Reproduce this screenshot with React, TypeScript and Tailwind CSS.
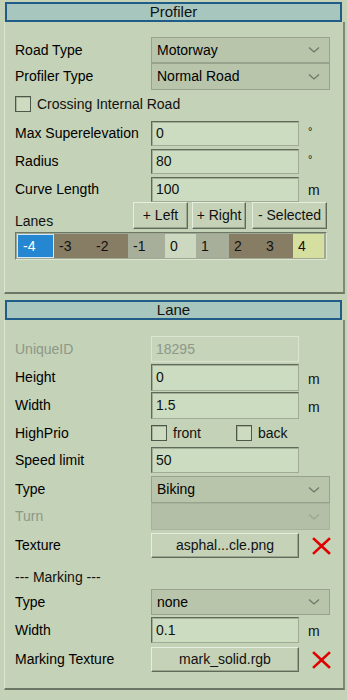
import React from "react";

const font = { fontFamily: '"Liberation Sans", Arial, sans-serif' };

const Chevron = ({ muted }: { muted?: boolean }) => (
    <svg width="12" height="8" viewBox="0 0 12 8" className="absolute right-[9px] top-1/2 -translate-y-1/2">
        <polyline points="1,1.5 6,6 11,1.5" fill="none" stroke={muted ? "#9aa58f" : "#6e7867"} strokeWidth="1.3" />
    </svg>
);

const Select = ({ value, disabled }: { value?: string; disabled?: boolean }) => (
    <div
        className={`relative w-[179px] h-full border flex items-center pl-[5px] ${
            disabled ? "bg-[#b3c0a7] border-[#a6b29a]" : "bg-[#b8c5ab] border-[#97a38c]"
        }`}
    >
        <span className="text-black">{value}</span>
        <Chevron muted={disabled} />
    </div>
);

const Input = ({ value, disabled }: { value: string; disabled?: boolean }) => (
    <div
        className={`w-[148px] h-full flex items-center pl-[4px] border ${
            disabled
                ? "bg-[#c6d4b9] border-[#dbe5d1] text-[#8d978a]"
                : "bg-[#ccdcc0] border-t-[#5f6a58] border-l-[#5f6a58] border-r-[#a0ab95] border-b-[#a0ab95] shadow-[inset_1px_1px_0_#a2ad98]"
        }`}
    >
        {value}
    </div>
);

const Button = ({ label, w }: { label: string; w: string }) => (
    <div
        className={`${w} h-full flex items-center justify-center bg-[#c5d2b8] border border-t-[#e6eedf] border-l-[#e6eedf] border-r-[#5f6a58] border-b-[#5f6a58] shadow-[inset_-1px_-1px_0_#9aa68f]`}
    >
        {label}
    </div>
);

const RedX = () => (
    <svg width="19" height="18" viewBox="0 0 19 18" className="ml-[13px]">
        <path d="M2 2 L17 16 M17 2 L2 16" stroke="#e00000" strokeWidth="2.6" strokeLinecap="square" />
    </svg>
);

const Check = () => (
    <div className="w-[16px] h-[16px] border border-[#4e5848] bg-[#cddcc1] shadow-[inset_1px_1px_0_#a7b29c]" />
);

const Row = ({
    label,
    h,
    mt,
    muted,
    children,
}: {
    label: string;
    h: string;
    mt: string;
    muted?: boolean;
    children?: React.ReactNode;
}) => (
    <div className={`flex items-center ${h} ${mt}`}>
        <div className={`w-[136px] ${muted ? "text-[#8d978a]" : "text-black"}`}>{label}</div>
        {children}
    </div>
);

const Unit = ({ u }: { u: string }) => (
    <span className={`ml-[9px] self-end ${u === "°" ? "self-start mt-[2px] text-[11px]" : "mb-[1px]"}`}>{u}</span>
);

const TitleBar = ({ title }: { title: string }) => (
    <div className="mx-[5px] h-[20px] bg-[#a6c6be] border-2 border-[#1f5d88] flex items-center justify-center text-[#111] text-[15px]">
        {title}
    </div>
);

const lanes = [
    { n: "-4", bg: "bg-[#2586d2]", fg: "text-white", w: "w-[37px]" },
    { n: "-3", bg: "bg-[#877d64]", fg: "text-[#111]", w: "w-[37px]" },
    { n: "-2", bg: "bg-[#877d64]", fg: "text-[#111]", w: "w-[37px]" },
    { n: "-1", bg: "bg-[#a7af9a]", fg: "text-[#111]", w: "w-[37px]" },
    { n: "0", bg: "bg-[#ccd8c0]", fg: "text-[#111]", w: "w-[31px]" },
    { n: "1", bg: "bg-[#a7af9a]", fg: "text-[#111]", w: "w-[33px]" },
    { n: "2", bg: "bg-[#877d64]", fg: "text-[#111]", w: "w-[32px]" },
    { n: "3", bg: "bg-[#877d64]", fg: "text-[#111]", w: "w-[32px]" },
    { n: "4", bg: "bg-[#d5e0a0]", fg: "text-[#111]", w: "w-[31px]" },
];

export default function App() {
    return (
        <div className="w-[347px] h-[700px] bg-[#c4d2b7] pt-[2px] text-[14px] text-[#111] overflow-hidden" style={font}>
            <TitleBar title="Profiler" />
            {/* Profiler panel */}
            <div className="ml-[4px] w-[341px] h-[272px] border-l border-l-[#dce6d3] border-r-2 border-r-[#7e8a75] border-b-2 border-b-[#6d7765] pl-[10px] pt-[15px]">
                <Row label="Road Type" h="h-[26px]" mt="mt-0">
                    <Select value="Motorway" />
                </Row>
                <Row label="Profiler Type" h="h-[27px]" mt="mt-0">
                    <Select value="Normal Road" />
                </Row>
                <div className="flex items-center h-[20px] mt-[4px]">
                    <Check />
                    <span className="ml-[6px]">Crossing Internal Road</span>
                </div>
                <Row label="Max Superelevation" h="h-[25px]" mt="mt-[7px]">
                    <Input value="0" />
                    <Unit u="°" />
                </Row>
                <Row label="Radius" h="h-[25px]" mt="mt-[3px]">
                    <Input value="80" />
                    <Unit u="°" />
                </Row>
                <Row label="Curve Length" h="h-[25px]" mt="mt-[3px]">
                    <Input value="100" />
                    <Unit u="m" />
                </Row>
                <div className="flex h-[27px] mt-[0px]">
                    <span className="self-end mb-[-3px] w-[118px]">Lanes</span>
                    <Button label="+ Left" w="w-[55px]" />
                    <div className="w-[4px]" />
                    <Button label="+ Right" w="w-[54px]" />
                    <div className="w-[6px]" />
                    <Button label="- Selected" w="w-[75px]" />
                </div>
                <div className="mt-[3px] w-[312px] h-[28px] border border-t-[#6d7765] border-l-[#6d7765] border-r-[#dce6d3] border-b-[#dce6d3] p-[1px] bg-[#9ea893] flex">
                    {lanes.map((l) => (
                        <div key={l.n} className={`${l.w} h-full ${l.bg} ${l.fg} flex items-center pl-[5px] ${l.n === "-4" ? "border border-[#d7e6f5]" : ""}`}>
                            {l.n}
                        </div>
                    ))}
                </div>
            </div>

            <div className="h-[6px]" />
            <TitleBar title="Lane" />
            {/* Lane panel */}
            <div className="ml-[4px] w-[341px] h-[370px] border-l border-l-[#dce6d3] border-r-2 border-r-[#7e8a75] border-b-2 border-b-[#6d7765] pl-[10px] pt-[16px]">
                <Row label="UniqueID" h="h-[26px]" mt="mt-0" muted>
                    <Input value="18295" disabled />
                </Row>
                <Row label="Height" h="h-[27px]" mt="mt-[2px]">
                    <Input value="0" />
                    <Unit u="m" />
                </Row>
                <Row label="Width" h="h-[27px]" mt="mt-[1px]">
                    <Input value="1.5" />
                    <Unit u="m" />
                </Row>
                <Row label="HighPrio" h="h-[22px]" mt="mt-[3px]">
                    <Check />
                    <span className="ml-[6px] w-[63px]">front</span>
                    <Check />
                    <span className="ml-[6px]">back</span>
                </Row>
                <Row label="Speed limit" h="h-[26px]" mt="mt-[3px]">
                    <Input value="50" />
                </Row>
                <Row label="Type" h="h-[27px]" mt="mt-[3px]">
                    <Select value="Biking" />
                </Row>
                <Row label="Turn" h="h-[27px]" mt="mt-0" muted>
                    <Select disabled />
                </Row>
                <Row label="Texture" h="h-[25px]" mt="mt-[3px]">
                    <Button label="asphal...cle.png" w="w-[148px]" />
                    <RedX />
                </Row>
                <div className="h-[18px] mt-[10px] flex items-center">--- Marking ---</div>
                <Row label="Type" h="h-[26px]" mt="mt-[3px]">
                    <Select value="none" />
                </Row>
                <Row label="Width" h="h-[26px]" mt="mt-[2px]">
                    <Input value="0.1" />
                    <Unit u="m" />
                </Row>
                <Row label="Marking Texture" h="h-[25px]" mt="mt-[4px]">
                    <Button label="mark_solid.rgb" w="w-[148px]" />
                    <RedX />
                </Row>
            </div>
        </div>
    );
}
